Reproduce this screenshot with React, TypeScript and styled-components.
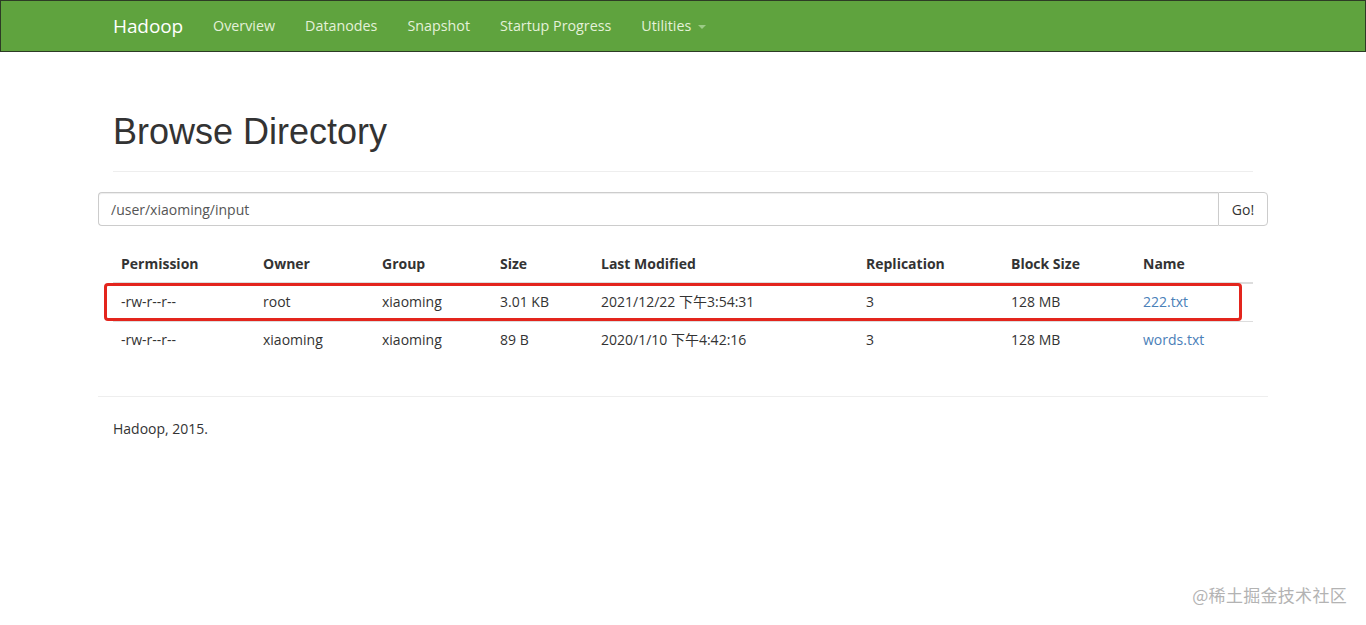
import React from "react"
import styled, { createGlobalStyle } from "styled-components"

const GlobalStyle = createGlobalStyle`
  html, body {
    margin: 0;
    padding: 0;
    background: #fff;
  }
  body {
    font-family: "Open Sans", "Noto Sans CJK SC", sans-serif;
    font-size: 14px;
    line-height: 20px;
    color: #333;
  }
  * {
    box-sizing: border-box;
  }
`

const files = [
  {
    permission: "-rw-r--r--",
    owner: "root",
    group: "xiaoming",
    size: "3.01 KB",
    modified: "2021/12/22 下午3:54:31",
    replication: "3",
    blockSize: "128 MB",
    name: "222.txt",
  },
  {
    permission: "-rw-r--r--",
    owner: "xiaoming",
    group: "xiaoming",
    size: "89 B",
    modified: "2020/1/10 下午4:42:16",
    replication: "3",
    blockSize: "128 MB",
    name: "words.txt",
  },
]

const columns = [
  { title: "Permission", width: 142 },
  { title: "Owner", width: 119 },
  { title: "Group", width: 118 },
  { title: "Size", width: 101 },
  { title: "Last Modified", width: 265 },
  { title: "Replication", width: 145 },
  { title: "Block Size", width: 132 },
  { title: "Name", width: 118 },
]

const App = () => {
  return (
    <Page>
      <GlobalStyle />
      <Navbar>
        <NavInner>
          <Brand>Hadoop</Brand>
          <NavItem>Overview</NavItem>
          <NavItem>Datanodes</NavItem>
          <NavItem>Snapshot</NavItem>
          <NavItem>Startup Progress</NavItem>
          <NavItem>
            Utilities <Caret />
          </NavItem>
        </NavInner>
      </Navbar>

      <Container>
        <PageHeader>
          <Title>Browse Directory</Title>
        </PageHeader>

        <InputGroup>
          <PathInput defaultValue="/user/xiaoming/input" />
          <GoButton>Go!</GoButton>
        </InputGroup>

        <TableWrap>
          <Table>
            <colgroup>
              {columns.map((c) => (
                <col key={c.title} style={{ width: c.width }} />
              ))}
            </colgroup>
            <thead>
              <tr>
                {columns.map((c) => (
                  <Th key={c.title}>{c.title}</Th>
                ))}
              </tr>
            </thead>
            <tbody>
              {files.map((f) => (
                <tr key={f.name}>
                  <Td>{f.permission}</Td>
                  <Td>{f.owner}</Td>
                  <Td>{f.group}</Td>
                  <Td>{f.size}</Td>
                  <Td>{f.modified}</Td>
                  <Td>{f.replication}</Td>
                  <Td>{f.blockSize}</Td>
                  <Td>
                    <FileLink href="#">{f.name}</FileLink>
                  </Td>
                </tr>
              ))}
            </tbody>
          </Table>
          <Highlight />
        </TableWrap>

        <Footer>
          <FooterText>Hadoop, 2015.</FooterText>
        </Footer>
      </Container>

      <Watermark>@稀土掘金技术社区</Watermark>
    </Page>
  )
}

export default App

const Page = styled.div`
  position: relative;
  width: 100%;
  min-height: 625px;
`

const Navbar = styled.div`
  width: 100%;
  height: 52px;
  background-color: #5fa33e;
  border: 1px solid #2d3b25;
  display: flex;
  justify-content: center;
`

const NavInner = styled.div`
  width: 1170px;
  height: 100%;
  display: flex;
  align-items: center;
  padding: 0 15px 1px;
`

const Brand = styled.div`
  font-size: 19px;
  color: #fff;
  padding-right: 15px;
  letter-spacing: -0.1px;
`

const NavItem = styled.div`
  font-size: 14.3px;
  color: #e4f1d9;
  padding: 0 15px;
  display: flex;
  align-items: center;
`

const Caret = styled.span`
  display: inline-block;
  margin-left: 7px;
  margin-top: 2px;
  width: 0;
  height: 0;
  border-left: 4px solid transparent;
  border-right: 4px solid transparent;
  border-top: 4px solid #9ccb86;
`

const Container = styled.div`
  width: 1170px;
  margin: 0 auto;
`

const PageHeader = styled.div`
  margin: 60px 15px 20px;
  padding-bottom: 9px;
  border-bottom: 1px solid #eee;
`

const Title = styled.h1`
  margin: 0 0 10px;
  font-family: "Liberation Sans", Arial, sans-serif;
  font-weight: 400;
  font-size: 36px;
  line-height: 40px;
  color: #333;
`

const InputGroup = styled.div`
  display: flex;
  height: 34px;
  margin-bottom: 20px;
`

const PathInput = styled.input`
  flex: 1;
  height: 34px;
  padding: 6px 12px;
  font-family: "Open Sans", "Noto Sans CJK SC", sans-serif;
  font-size: 14px;
  color: #555;
  border: 1px solid #ccc;
  border-right: none;
  border-radius: 4px 0 0 4px;
  box-shadow: inset 0 1px 1px rgba(0, 0, 0, 0.075);
  outline: none;
`

const GoButton = styled.button`
  width: 50px;
  height: 34px;
  font-family: "Open Sans", "Noto Sans CJK SC", sans-serif;
  font-size: 14px;
  color: #333;
  background: #fff;
  border: 1px solid #ccc;
  border-radius: 0 4px 4px 0;
  padding: 0;
`

const TableWrap = styled.div`
  position: relative;
  margin: 0 15px 37px;
`

const Table = styled.table`
  width: 100%;
  border-collapse: collapse;
  table-layout: fixed;
`

const Th = styled.th`
  text-align: left;
  font-weight: 700;
  padding: 8px;
  line-height: 20px;
  border-bottom: 2px solid #ddd;
  color: #333;
`

const Td = styled.td`
  padding: 7px 8px 9px;
  line-height: 21px;
  border-top: 1px solid #ddd;
  color: #333;
  white-space: nowrap;
`

const FileLink = styled.a`
  color: #4a80b8;
  text-decoration: none;
`

const Highlight = styled.div`
  position: absolute;
  left: -9px;
  top: 37px;
  width: 1138px;
  height: 38px;
  border: 3px solid #e3251d;
  border-radius: 4px;
  pointer-events: none;
`

const Footer = styled.div`
  border-top: 1px solid #eee;
  padding: 22px 15px 0;
`

const FooterText = styled.p`
  margin: 0;
  font-size: 14px;
  line-height: 20px;
  color: #333;
`

const Watermark = styled.div`
  position: absolute;
  right: 19px;
  top: 583px;
  font-family: "Noto Sans CJK SC", sans-serif;
  font-size: 17px;
  line-height: 24px;
  color: #b3b3b3;
  letter-spacing: 0.3px;
`
